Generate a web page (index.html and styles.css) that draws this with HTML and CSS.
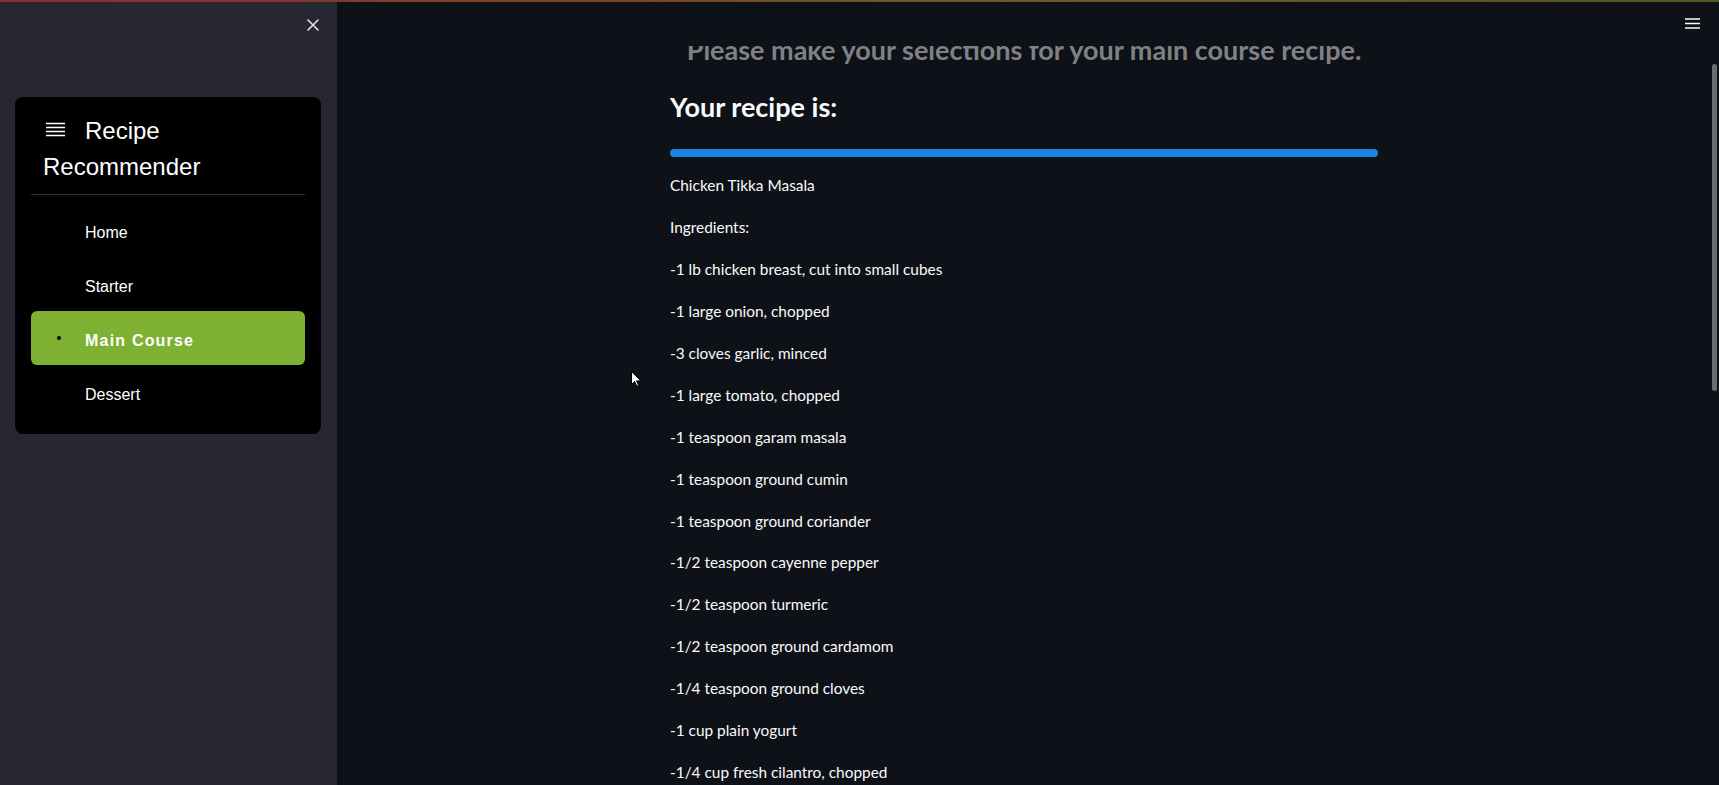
FILE: index.html
```html
<!DOCTYPE html>
<html lang="en">
<head>
<meta charset="utf-8">
<title>Recipe Recommender</title>
<link rel="stylesheet" href="styles.css">
</head>
<body>
<div class="app">
  <div class="decoration"></div>
  <aside class="sidebar">
    <div class="sidebar-top">
      <svg class="close" width="12" height="12" viewBox="0 0 12 12"><path d="M1 1L11 11M11 1L1 11" stroke="#e6e6e6" stroke-width="1.6" stroke-linecap="round"/></svg>
    </div>
    <nav class="menu-card">
      <div class="menu-title"><svg class="menu-icon" width="19" height="15" viewBox="0 0 19 15"><path d="M0 1.5H19M0 5.5H19M0 9.5H19M0 13.5H19" stroke="#ffffff" stroke-width="1.5"/></svg>Recipe Recommender</div>
      <hr class="menu-sep">
      <ul class="menu-list">
        <li class="menu-item"><span class="dot"></span><span class="label">Home</span></li>
        <li class="menu-item"><span class="dot"></span><span class="label">Starter</span></li>
        <li class="menu-item active"><span class="dot"></span><span class="label">Main Course</span></li>
        <li class="menu-item"><span class="dot"></span><span class="label">Dessert</span></li>
      </ul>
    </nav>
  </aside>
  <main class="main">
    <header class="topbar">
      <svg class="hamburger" width="15" height="11" viewBox="0 0 15 11"><path d="M0 1H15M0 5.5H15M0 10H15" stroke="#fafafa" stroke-width="1.6"/></svg>
    </header>
    <div class="block">
      <h3 class="prompt">Please make your selections for your main course recipe.</h3>
      <h3 class="recipe-title">Your recipe is:</h3>
      <div class="progress"></div>
      <p>Chicken Tikka Masala</p>
      <p>Ingredients:</p>
      <p>-1 lb chicken breast, cut into small cubes</p>
      <p>-1 large onion, chopped</p>
      <p>-3 cloves garlic, minced</p>
      <p>-1 large tomato, chopped</p>
      <p>-1 teaspoon garam masala</p>
      <p>-1 teaspoon ground cumin</p>
      <p>-1 teaspoon ground coriander</p>
      <p>-1/2 teaspoon cayenne pepper</p>
      <p>-1/2 teaspoon turmeric</p>
      <p>-1/2 teaspoon ground cardamom</p>
      <p>-1/4 teaspoon ground cloves</p>
      <p>-1 cup plain yogurt</p>
      <p>-1/4 cup fresh cilantro, chopped</p>
    </div>
    <div class="scroll-thumb"></div>
    <svg class="cursor" width="11" height="16" viewBox="0 0 11 16"><path d="M0.5 0.5V13.5L3.6 10.6L5.8 15.2L7.6 14.4L5.5 9.9H9.8Z" fill="#ffffff" stroke="#000000" stroke-width="1"/></svg>
  </main>
</div>
</body>
</html>
```

FILE: styles.css
```css
html, body {
  margin: 0;
  padding: 0;
  height: 100%;
  overflow: hidden;
  background: #0e1117;
}

.app {
  position: relative;
  display: flex;
  height: 785px;
  font-family: "Lato", "Liberation Sans", sans-serif;
}

.decoration {
  position: absolute;
  top: 0;
  left: 0;
  right: 0;
  height: 2px;
  background: linear-gradient(90deg, #8e2a2e, #6a5a28 60%, #55552a);
  z-index: 10;
}

/* Sidebar */
.sidebar {
  flex: none;
  width: 337px;
  background: #262730;
}

.sidebar-top {
  height: 50px;
  display: flex;
  justify-content: flex-end;
  align-items: center;
  padding-right: 18px;
}

.close {
  display: block;
}

.menu-card {
  margin: 47px 16px 0 15px;
  padding: 16px 16px 15px 16px;
  background: #000000;
  border-radius: 8px;
  font-family: "Liberation Sans", Arial, sans-serif;
  color: #ffffff;
}

.menu-title {
  padding-left: 12px;
  font-size: 24px;
  line-height: 35.5px;
}

.menu-icon {
  margin-left: 3px;
  margin-right: 20px;
  vertical-align: 2px;
}

.menu-sep {
  margin: 10px 0 8px 0;
  border: 0;
  border-top: 1px solid #333333;
  height: 0;
}

.menu-list {
  list-style: none;
  margin: 0;
  padding: 0;
}

.menu-item {
  display: flex;
  align-items: center;
  height: 48px;
  padding-top: 6px;
  border-radius: 6px;
  font-size: 16px;
  color: #ffffff;
}

.dot {
  flex: none;
  width: 4px;
  height: 4px;
  border-radius: 50%;
  background: #000000;
  margin-left: 26px;
  margin-right: 24px;
  margin-top: -6px;
}

.menu-item.active {
  background: #7eb034;
  font-weight: 700;
  letter-spacing: 1.2px;
}

/* Main */
.main {
  position: relative;
  flex: 1;
  overflow: hidden;
  background: #0e1117;
  padding-right: 8px;
}

.topbar {
  position: absolute;
  top: 0;
  left: 0;
  right: 0;
  height: 46px;
  background: #0e1117;
  z-index: 2;
  display: flex;
  justify-content: flex-end;
  padding: 18px 19px 0 0;
  box-sizing: border-box;
}

.hamburger {
  display: block;
}

.block {
  width: 708px;
  margin: 0 auto;
  padding-top: 33.5px;
  color: #fafafa;
}

.prompt {
  margin: 0;
  font-size: 27px;
  line-height: 1.2;
  font-weight: 700;
  text-align: center;
  color: #808185;
}

.recipe-title {
  margin: 25.6px 0 0 0;
  font-size: 27px;
  line-height: 1.2;
  font-weight: 700;
  color: #fafafa;
}

.progress {
  margin-top: 25.5px;
  height: 8px;
  border-radius: 4px;
  background: #1c83e1;
  margin-bottom: 16px;
}

.block p {
  margin: 0 0 16.3px 0;
  font-size: 15.4px;
  line-height: 25.6px;
}

.scroll-thumb {
  position: absolute;
  top: 64px;
  right: 2px;
  width: 5px;
  height: 327px;
  border-radius: 3px;
  background: #6c6d72;
}

.cursor {
  position: absolute;
  left: 294px;
  top: 371px;
}
```
